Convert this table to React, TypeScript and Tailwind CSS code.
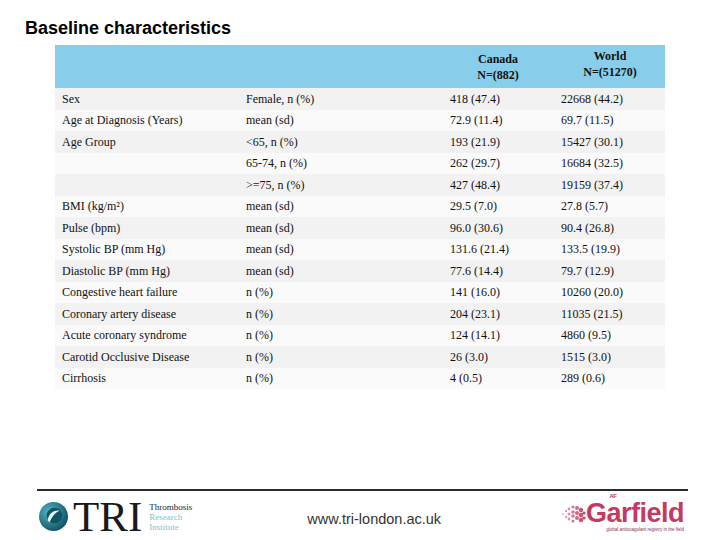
const rows: [string, string, string, string][] = [
  ['Sex', 'Female, n (%)', '418 (47.4)', '22668 (44.2)'],
  ['Age at Diagnosis (Years)', 'mean (sd)', '72.9 (11.4)', '69.7 (11.5)'],
  ['Age Group', '<65, n (%)', '193 (21.9)', '15427 (30.1)'],
  ['', '65-74, n (%)', '262 (29.7)', '16684 (32.5)'],
  ['', '>=75, n (%)', '427 (48.4)', '19159 (37.4)'],
  ['BMI (kg/m²)', 'mean (sd)', '29.5 (7.0)', '27.8 (5.7)'],
  ['Pulse (bpm)', 'mean (sd)', '96.0 (30.6)', '90.4 (26.8)'],
  ['Systolic BP (mm Hg)', 'mean (sd)', '131.6 (21.4)', '133.5 (19.9)'],
  ['Diastolic BP (mm Hg)', 'mean (sd)', '77.6 (14.4)', '79.7 (12.9)'],
  ['Congestive heart failure', 'n (%)', '141 (16.0)', '10260 (20.0)'],
  ['Coronary artery disease', 'n (%)', '204 (23.1)', '11035 (21.5)'],
  ['Acute coronary syndrome', 'n (%)', '124 (14.1)', '4860 (9.5)'],
  ['Carotid Occlusive Disease', 'n (%)', '26 (3.0)', '1515 (3.0)'],
  ['Cirrhosis', 'n (%)', '4 (0.5)', '289 (0.6)'],
];

function TriLogo() {
  return (
    <div className="flex items-center">
      <svg width="31" height="31" viewBox="0 0 32 32">
        <defs>
          <radialGradient id="tg" cx="0.35" cy="0.35" r="0.75">
            <stop offset="0" stopColor="#4fb6c4" />
            <stop offset="1" stopColor="#0c4a5c" />
          </radialGradient>
        </defs>
        <circle cx="16" cy="16" r="15" fill="url(#tg)" />
        <circle cx="17" cy="15" r="8" fill="#0f5366" />
        <path d="M10 20 C11 13 16 9 22 10 C18 12 14 16 12 22 Z" fill="#e8f6f7" />
      </svg>
      <span className="ml-[4px] text-[43px] leading-none text-[#1a1a1a]" style={{ fontFamily: '"Liberation Serif", serif' }}>
        TRI
      </span>
      <div className="ml-[7px] flex flex-col text-[9px] leading-[10px]" style={{ fontFamily: '"Liberation Serif", serif' }}>
        <span className="text-[#222]">Thrombosis</span>
        <span className="text-[#7cc3c8]">Research</span>
        <span className="text-[#7cc3c8]">Institute</span>
      </div>
    </div>
  );
}

function GarfieldLogo() {
  return (
    <div className="flex flex-col items-end">
      <div className="flex items-end">
        <svg width="26" height="22" viewBox="0 0 26 22" className="mb-[2px]">
          {[
            [3, 11, 1], [6, 8, 1.2], [6, 14, 1.2], [9, 6, 1.4], [9, 11, 1.5], [9, 16, 1.4],
            [13, 4, 1.6], [13, 9, 1.8], [13, 13, 1.8], [13, 18, 1.6], [17, 5, 2], [17, 10, 2],
            [17, 15, 2], [21, 7, 2.2], [21, 12, 2.3], [21, 17, 2.2], [24, 10, 1.6], [24, 15, 1.6],
          ].map(([x, y, r], i) => (
            <circle key={i} cx={x} cy={y} r={r} fill="#c43a62" opacity={0.35 + x / 40} />
          ))}
        </svg>
        <div className="flex items-end text-[27px] font-bold leading-none text-[#c43a62] tracking-[-0.5px]" style={{ fontFamily: '"Liberation Sans", sans-serif' }}>
          <span>G</span>
          <span className="relative">
            <span className="absolute left-[3px] top-[-7px] text-[6px] leading-none">AF</span>
            a
          </span>
          <span>rfield</span>
        </div>
      </div>
      <span className="mt-[1px] text-[4.5px] leading-none text-[#8a3350]" style={{ fontFamily: '"Liberation Sans", sans-serif' }}>
        global anticoagulant registry in the field
      </span>
    </div>
  );
}

export default function App() {
  return (
    <div className="relative w-[720px] h-[540px] bg-white overflow-hidden">
      <h1
        className="pl-[25px] pt-[18px] text-[18px] font-bold leading-[20px] text-black"
        style={{ fontFamily: '"Liberation Sans", Arial, sans-serif' }}
      >
        Baseline characteristics
      </h1>

      <div className="ml-[55px] mt-[7px] w-[610px] text-[12px] text-[#111]" style={{ fontFamily: '"Liberation Serif", serif' }}>
        <div className="flex h-[43px] bg-[#88cde9] font-bold leading-[16px]">
          <div className="w-[395px] shrink-0" />
          <div className="flex w-[96px] shrink-0 flex-col items-center justify-end pb-[5px]">
            <span>Canada</span>
            <span>N=(882)</span>
          </div>
          <div className="flex flex-1 flex-col items-center pl-[9px] pt-[3px]">
            <span>World</span>
            <span>N=(51270)</span>
          </div>
        </div>
        {rows.map((r, i) => (
          <div key={i} className={`flex h-[21.5px] items-center ${i % 2 === 0 ? 'bg-[#f2f2f2]' : 'bg-[#fafafa]'}`}>
            <div className="w-[191px] pl-[7px]">{r[0]}</div>
            <div className="w-[204px]">{r[1]}</div>
            <div className="w-[111px]">{r[2]}</div>
            <div className="flex-1">{r[3]}</div>
          </div>
        ))}
      </div>

      <div className="absolute left-[37px] right-[32px] top-[489px] h-[2px] bg-[#2b2b33]" />
      <div className="absolute left-[38px] right-[36px] top-[495px] flex items-center">
        <TriLogo />
        <span
          className="ml-[115px] mt-[6px] text-[14.5px] text-[#333]"
          style={{ fontFamily: '"Liberation Sans", Arial, sans-serif' }}
        >
          www.tri-london.ac.uk
        </span>
        <div className="ml-auto">
          <GarfieldLogo />
        </div>
      </div>
    </div>
  );
}
